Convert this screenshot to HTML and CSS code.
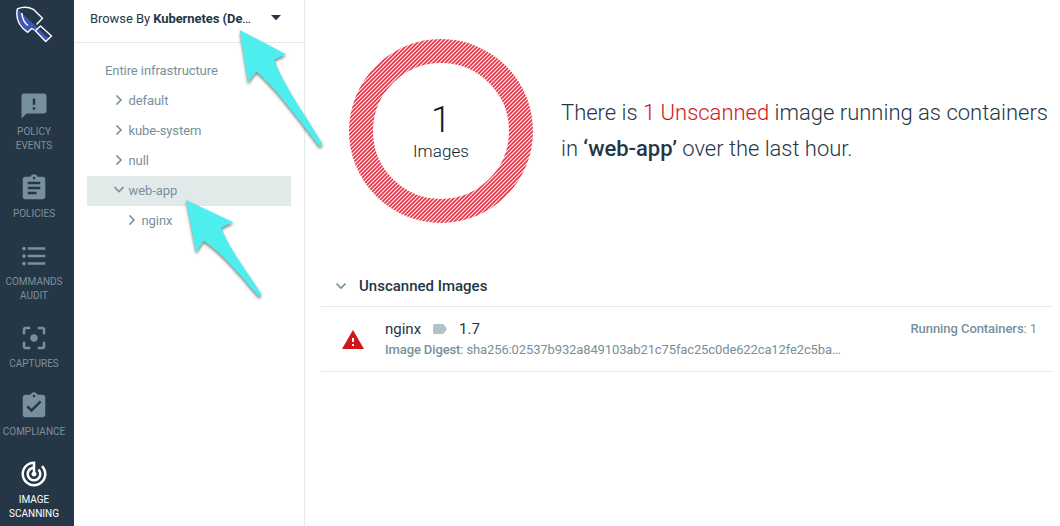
FILE: index.html
```html
<!DOCTYPE html>
<html lang="en">
<head>
<meta charset="utf-8">
<title>Image Scanning</title>
<link rel="stylesheet" href="styles.css">
</head>
<body>
<div class="app">
  <nav class="nav">
    <svg class="logo" width="40" height="44" viewBox="0 0 40 44">
      <path d="M3.300 9L19.500 24L35 38.500L31.700 42L21.300 30.700L17.700 28.500L13.700 32.300Q1 24 3.300 9Z" fill="#3d56b5"/>
      <path d="M3.300 8.800Q12 5.500 19.300 9.300L28.500 18.300L22.500 24.500M20.500 30L17.700 28.500L13.700 32.300Q.5 23.500 3.300 8.800M21.300 30.700L26.500 26L37.500 36L31.700 41.500Z" fill="none" stroke="#fff" stroke-width="1.400" stroke-linejoin="round"/>
      <path d="M7.800 13Q8.500 21.500 14 25.500" fill="none" stroke="#fff" stroke-width="1.500"/>
    </svg>
    <a class="item"><svg class="icon" viewBox="0 0 24 24"><path d="M20 2H4c-1.100 0-1.990.9-1.990 2L2 22l4-4h14c1.100 0 2-.9 2-2V4c0-1.100-.9-2-2-2zm-7 9h-2V6h2v5zm0 4h-2v-2h2v2z"/></svg><span>POLICY<br>EVENTS</span></a>
    <a class="item"><svg class="icon" viewBox="0 0 24 24"><path d="M19 3h-4.180C14.400 1.840 13.300 1 12 1c-1.300 0-2.400.84-2.820 2H5c-1.100 0-2 .9-2 2v14c0 1.100.9 2 2 2h14c1.100 0 2-.9 2-2V5c0-1.100-.9-2-2-2zm-7 0c.55 0 1 .45 1 1s-.45 1-1 1-1-.45-1-1 .45-1 1-1zm2 14H7v-2h7v2zm3-4H7v-2h10v2zm0-4H7V7h10v2z"/></svg><span>POLICIES</span></a>
    <a class="item"><svg class="icon" viewBox="0 0 24 24"><path d="M4 10.500c-.83 0-1.500.67-1.500 1.500s.67 1.500 1.500 1.500 1.500-.67 1.500-1.500-.67-1.500-1.500-1.500zm0-6c-.83 0-1.500.67-1.500 1.500S3.170 7.500 4 7.500 5.500 6.830 5.500 6 4.830 4.500 4 4.500zm0 12c-.83 0-1.500.68-1.500 1.500s.68 1.500 1.500 1.500 1.500-.68 1.500-1.500-.67-1.500-1.500-1.500zM7 19h14v-2H7v2zm0-6h14v-2H7v2zm0-8v2h14V5H7z"/></svg><span>COMMANDS<br>AUDIT</span></a>
    <a class="item"><svg class="icon" viewBox="0 0 24 24"><path d="M12 9c-1.660 0-3 1.340-3 3s1.340 3 3 3 3-1.340 3-3-1.340-3-3-3zm-7 6H3v4c0 1.100.9 2 2 2h4v-2H5v-4zM5 5h4V3H5c-1.100 0-2 .9-2 2v4h2V5zm14-2h-4v2h4v4h2V5c0-1.100-.9-2-2-2zm0 16h-4v2h4c1.100 0 2-.9 2-2v-4h-2v4z"/></svg><span>CAPTURES</span></a>
    <a class="item"><svg class="icon" viewBox="0 0 24 24"><path d="M19 3h-4.180C14.400 1.840 13.300 1 12 1c-1.300 0-2.400.84-2.820 2H5c-1.100 0-2 .9-2 2v14c0 1.100.9 2 2 2h14c1.100 0 2-.9 2-2V5c0-1.100-.9-2-2-2zm-7 0c.55 0 1 .45 1 1s-.45 1-1 1-1-.45-1-1 .45-1 1-1zm-2 14l-4-4 1.410-1.410L10 14.170l6.590-6.590L18 9l-8 8z"/></svg><span>COMPLIANCE</span></a>
    <a class="item active"><svg class="icon" viewBox="0 0 24 24"><path d="M19.070 4.930l-1.410 1.410C19.100 7.790 20 9.790 20 12c0 4.420-3.580 8-8 8s-8-3.580-8-8c0-4.080 3.050-7.440 7-7.930v2.020C8.160 6.570 6 9.030 6 12c0 3.310 2.690 6 6 6s6-2.690 6-6c0-1.660-.67-3.160-1.760-4.240l-1.410 1.410C15.550 9.900 16 10.900 16 12c0 2.210-1.790 4-4 4s-4-1.790-4-4c0-1.860 1.280-3.410 3-3.860v2.140c-.6.350-1 .98-1 1.720 0 1.100.9 2 2 2s2-.9 2-2c0-.74-.4-1.380-1-1.720V2h-1C6.480 2 2 6.480 2 12s4.480 10 10 10 10-4.480 10-10c0-2.760-1.120-5.260-2.930-7.070z"/></svg><span>IMAGE<br>SCANNING</span></a>
  </nav>

  <aside class="browser">
    <header class="browse">
      <div class="browse-label">Browse By <b>Kubernetes (De</b>…</div>
      <svg width="10" height="6" viewBox="0 0 10 6"><path d="M0 0H10L5 5.200Z" fill="#253746"/></svg>
    </header>
    <div class="tree">
      <div class="node root"><span>Entire infrastructure</span></div>
      <div class="node"><svg class="chev" viewBox="0 0 10 10"><path d="M2.500 .5L7 5L2.500 9.500"/></svg><span>default</span></div>
      <div class="node"><svg class="chev" viewBox="0 0 10 10"><path d="M2.500 .5L7 5L2.500 9.500"/></svg><span>kube-system</span></div>
      <div class="node"><svg class="chev" viewBox="0 0 10 10"><path d="M2.500 .5L7 5L2.500 9.500"/></svg><span>null</span></div>
      <div class="node selected"><svg class="chev" viewBox="0 0 10 10"><path d="M.5 2L5 6.500L9.500 2"/></svg><span>web-app</span></div>
      <div class="node child"><svg class="chev" viewBox="0 0 10 10"><path d="M2.500 .5L7 5L2.500 9.500"/></svg><span>nginx</span></div>
    </div>
  </aside>

  <main class="main">
    <section class="summary">
      <div class="donut">
        <svg class="ring" width="184" height="184" viewBox="0 0 184 184">
          <defs><pattern id="hatch" width="4" height="4" patternUnits="userSpaceOnUse"><path d="M-1 1L1 -1M0 4L4 0M3 5L5 3" stroke="#e0384a" stroke-width="1.800"/></pattern></defs>
          <circle cx="92" cy="92" r="80" fill="none" stroke="url(#hatch)" stroke-width="24"/>
        </svg>
        <div class="donut-text"><span class="count">1</span><span class="unit">Images</span></div>
      </div>
      <p class="message"><span class="line">There is <span class="red">1 Unscanned</span> image running as containers</span><span class="line second">in <b>‘web-app’</b> over the last hour.</span></p>
    </section>
    <section class="images">
      <h2 class="heading"><svg class="chev" viewBox="0 0 10 10"><path d="M.5 2.500L5 7L9.500 2.500"/></svg><span>Unscanned Images</span></h2>
      <div class="row">
        <svg class="warning" width="22" height="19" viewBox="1 2 22 19"><path d="M1 21h22L12 2 1 21zm12-3h-2v-2h2v2zm0-4h-2v-4h2v4z" fill="#d0161b"/></svg>
        <div class="details">
          <div class="name"><span>nginx</span><svg width="14" height="10" viewBox="0 0 14 10"><path d="M1.500 0H9.500Q10.500 0 11.200 1L14 5L11.200 9Q10.500 10 9.500 10H1.500Q0 10 0 8.500V1.500Q0 0 1.500 0Z" fill="#b3c2c6"/></svg><span>1.7</span></div>
          <div class="digest"><b>Image Digest</b>: sha256:02537b932a849103ab21c75fac25c0de622ca12fe2c5ba…</div>
        </div>
        <div class="running"><b>Running Containers</b>: 1</div>
      </div>
    </section>
  </main>

  <svg class="pointers" width="1060" height="526" viewBox="0 0 1060 526">
    <path d="M239.700 30L286 54.300L274.300 59.700C283 85 306 116 322 143Q322.500 147 319.500 146.500C302 124 275 87 256.300 71.700L248 82.700Z"/>
    <path d="M186 200L233.300 222.300L221.300 227.700C228 247 246 270 261 293.500Q261 297 258.500 296.500C240 275 222 253 203.700 241L196 252.300Z"/>
  </svg>
</div>
</body>
</html>
```
FILE: styles.css
```css
* { box-sizing: border-box; }
body { margin: 0; font-family: Roboto, "Liberation Sans", sans-serif; color: #253746; background: #fff; }
svg { display: block; flex: none; }
.app { display: flex; position: relative; width: 1060px; height: 526px; overflow: hidden; }
.nav { width: 74px; flex: none; padding-right: 6px; background: #253746; display: flex; flex-direction: column; align-items: center; }
.logo { margin: 0 0 47px 0; }
.item { display: flex; flex-direction: column; align-items: center; gap: 4px; margin-bottom: 20px; font-size: 10px; line-height: 14px; text-align: center; color: #7d919b; }
.icon { width: 30px; height: 30px; fill: #78909c; }
.active { color: #fff; }
.active .icon { fill: #fff; }
.browser { width: 231px; flex: none; border-right: 1px solid #e2eae9; }
.browse { display: flex; align-items: center; justify-content: space-between; height: 43px; padding: 0 23px 6px 16px; border-bottom: 1px solid #e2eae9; font-size: 13px; letter-spacing: -.07px; }
b { font-weight: 500; }
.browse b { font-weight: 700; }
.tree { padding: 13px 13px 0; font-size: 13px; letter-spacing: -.08px; color: #78909c; }
.node { display: flex; align-items: center; gap: 4.500px; height: 30px; padding: 0 0 2px 27px; }
.root { padding-left: 18px; }
.child { padding-left: 40px; }
.selected { background: #e2eae9; }
.chev { width: 10px; height: 10px; fill: none; stroke: #78909c; stroke-width: 1.6; }
.main { flex: 1; min-width: 0; padding: 39px 7px 0 16px; }
.summary { display: flex; gap: 28px; padding-left: 28px; height: 227px; }
.donut { display: grid; width: 184px; height: 184px; flex: none; }
.ring, .donut-text { grid-area: 1 / 1; }
.donut-text { display: flex; flex-direction: column; align-items: center; padding-top: 60px; color: #10192f; }
.count { font-size: 36px; line-height: 42px; font-weight: 300; }
.unit { font-size: 17px; line-height: 20px; font-weight: 300; letter-spacing: .1px; }
.message { margin: 56px 0 0; font-size: 22px; line-height: 36px; font-weight: 300; white-space: nowrap; }
.line { display: block; }
.second { letter-spacing: -.03px; }
.red { color: #d0161b; }
.heading { display: flex; align-items: center; gap: 13px; height: 41px; margin: 0; padding-left: 15px; border-bottom: 1px solid #e2eae9; font-size: 15px; font-weight: 500; }
.row { display: flex; height: 65px; padding: 12px 16px 0 21px; border-bottom: 1px solid #e2eae9; }
.warning { margin-top: 11px; }
.details { margin-left: 21px; }
.name { display: flex; align-items: center; gap: 12px; font-size: 15px; line-height: 20px; }
.digest, .running { font-size: 13px; line-height: 20px; letter-spacing: -.12px; color: #78909c; white-space: nowrap; }
.digest { margin-top: 1px; }
.running { margin-left: auto; letter-spacing: -.07px; }
.pointers { position: absolute; inset: 0; fill: #4deeed; filter: drop-shadow(0 2px 1.5px rgba(0, 0, 0, .5)); }
```
